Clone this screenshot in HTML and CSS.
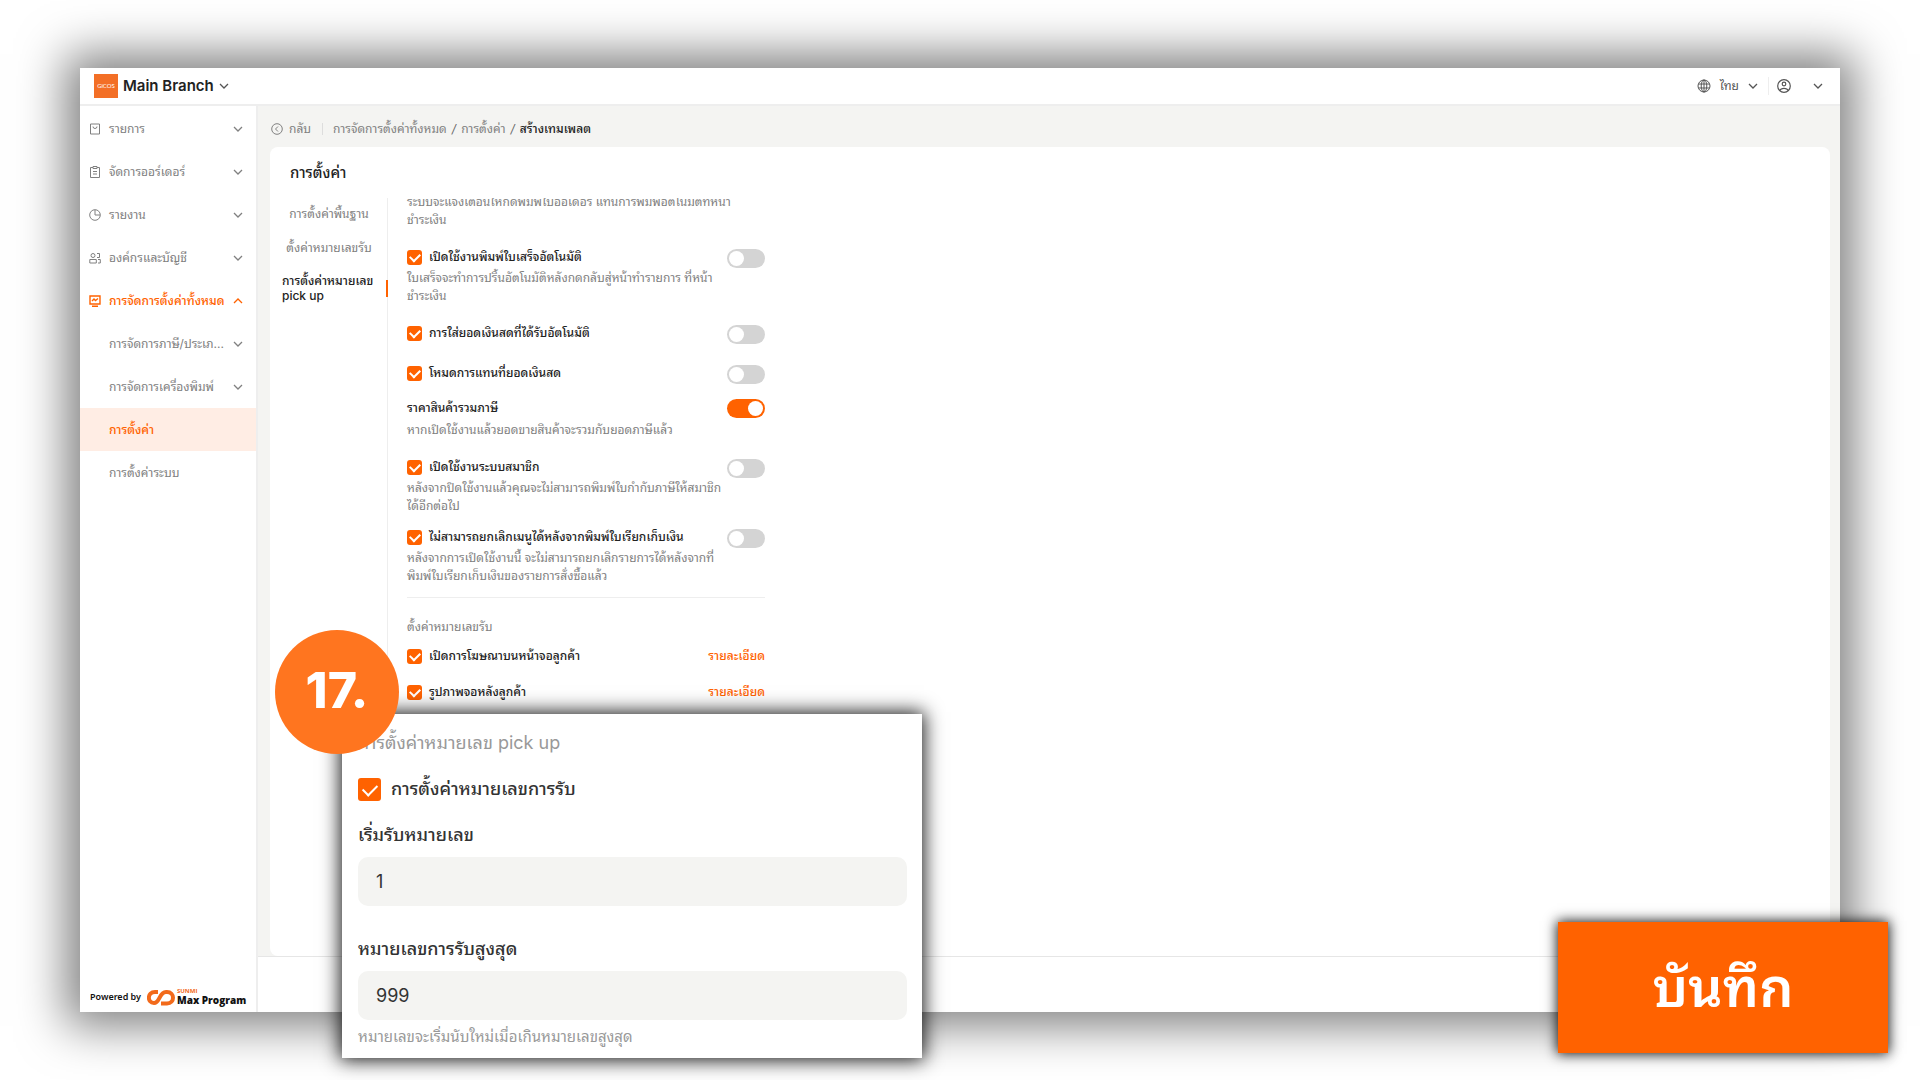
FILE: index.html
```html
<!DOCTYPE html>
<html lang="th">
<head>
<meta charset="utf-8">
<title>การตั้งค่า</title>
<link rel="stylesheet" href="styles.css">
</head>
<body>
<svg width="0" height="0" class="defs" aria-hidden="true">
  <symbol id="chev" viewBox="0 0 10 10"><path d="M1 3l4 4 4-4" fill="none" stroke="currentColor" stroke-width="1.3"/></symbol>
</svg>
<div class="window">
  <header class="topbar">
    <button class="branch" type="button"><span class="logo">GiCOS</span>Main Branch<svg class="chev"><use href="#chev"/></svg></button>
    <div class="top-tools">
      <button class="lang" type="button">
        <svg class="icon-m" viewBox="0 0 14 14" fill="none" stroke="currentColor"><circle cx="7" cy="7" r="6"/><ellipse cx="7" cy="7" rx="2.800" ry="6"/><path d="M7 1v12M1.500 5h11M1.500 9h11"/></svg>
        ไทย<svg class="chev"><use href="#chev"/></svg></button>
      <button class="user" type="button" aria-label="บัญชี">
        <svg class="icon-m" viewBox="0 0 14 14" fill="none" stroke="currentColor" stroke-width="1.2"><circle cx="7" cy="7" r="6.3"/><circle cx="7" cy="5" r="1.8"/><path d="M2.800 11.500C4 8.600 10 8.600 11.200 11.500"/></svg>
        <svg class="chev"><use href="#chev"/></svg></button>
    </div>
  </header>
  <div class="body">
    <aside class="sidebar">
      <nav class="menu">
        <a href="#"><svg class="icon" viewBox="0 0 12 12"><path d="M1.500 1h9v10h-9zM4 3.500a2 2 0 0 0 4 0"/></svg><span>รายการ</span><svg class="chev"><use href="#chev"/></svg></a>
        <a href="#"><svg class="icon" viewBox="0 0 12 12"><path d="M4 1.500H1.500v10h9v-10H8M4 .500h4v2H4zM4 5.500h4M4 8h4"/></svg><span>จัดการออร์เดอร์</span><svg class="chev"><use href="#chev"/></svg></a>
        <a href="#"><svg class="icon" viewBox="0 0 12 12"><circle cx="6" cy="6" r="5.300"/><path d="M6 1v5h5"/></svg><span>รายงาน</span><svg class="chev"><use href="#chev"/></svg></a>
        <a href="#"><svg class="icon" viewBox="0 0 12 12"><circle cx="4" cy="3.500" r="2"/><path d="M.800 11V7.500h6.500V11zM8 1.500h2.500v4H8M9 7.500h2.300V11H9"/></svg><span>องค์กรและบัญชี</span><svg class="chev"><use href="#chev"/></svg></a>
        <a href="#" class="open"><svg class="icon" viewBox="0 0 12 12"><path d="M1 1h10v8H1zM3 11.300h6M3 6l2-2 1.500 1.500L9 3.500" stroke-width="1.400"/></svg><span>การจัดการตั้งค่าทั้งหมด</span><svg class="chev up"><use href="#chev"/></svg></a>
        <a href="#" class="sub"><span>การจัดการภาษี/ประเภ...</span><svg class="chev"><use href="#chev"/></svg></a>
        <a href="#" class="sub"><span>การจัดการเครื่องพิมพ์</span><svg class="chev"><use href="#chev"/></svg></a>
        <a href="#" class="sub current"><span>การตั้งค่า</span></a>
        <a href="#" class="sub"><span>การตั้งค่าระบบ</span></a>
      </nav>
      <div class="powered"><span>Powered by</span>
        <svg class="mark" viewBox="0 0 28 17" fill="none" stroke="#f26a1b" stroke-width="4"><path d="M11 3H8C0 3 0 14 7 14c6 0 5-11 12-11h1c8 0 8 11.500 0 11.500h-6"/></svg>
        <div class="brand"><small>SUNMI</small><b>Max Program</b></div>
      </div>
    </aside>
    <main class="main">
      <nav class="crumbs">
        <a href="#" class="back"><svg class="icon" viewBox="0 0 12 12"><circle cx="6" cy="6" r="5.300"/><path d="M7 3.500L4.500 6 7 8.500"/></svg>กลับ</a>
        <a href="#">การจัดการตั้งค่าทั้งหมด</a><i>/</i><a href="#">การตั้งค่า</a><i>/</i><strong>สร้างเทมเพลต</strong>
      </nav>
      <section class="card">
        <h1>การตั้งค่า</h1>
        <div class="columns">
          <nav class="tabs">
            <a href="#">การตั้งค่าพื้นฐาน</a>
            <a href="#">ตั้งค่าหมายเลขรับ</a>
            <a href="#" class="active">การตั้งค่าหมายเลข<br>pick up</a>
          </nav>
          <div class="options">
            <p class="cut">ระบบจะแจ้งเตือนให้กดพิมพ์ใบออเดอร์ แทนการพิมพ์อัตโนมัติที่หน้า<br>ชำระเงิน</p>
            <div class="option gap-l"><label><input type="checkbox" checked>เปิดใช้งานพิมพ์ใบเสร็จอัตโนมัติ</label><input type="checkbox" class="switch" aria-label="เปิดใช้งานพิมพ์ใบเสร็จอัตโนมัติ"></div>
            <p>ใบเสร็จจะทำการปริ้นอัตโนมัติหลังกดกลับสู่หน้าทำรายการ ที่หน้า<br>ชำระเงิน</p>
            <div class="option gap-l"><label><input type="checkbox" checked>การใส่ยอดเงินสดที่ได้รับอัตโนมัติ</label><input type="checkbox" class="switch" aria-label="การใส่ยอดเงินสดที่ได้รับอัตโนมัติ"></div>
            <div class="option gap-l"><label><input type="checkbox" checked>โหมดการแทนที่ยอดเงินสด</label><input type="checkbox" class="switch" aria-label="โหมดการแทนที่ยอดเงินสด"></div>
            <div class="option plain gap-m"><label for="tax">ราคาสินค้ารวมภาษี</label><input id="tax" type="checkbox" class="switch" checked></div>
            <p>หากเปิดใช้งานแล้วยอดขายสินค้าจะรวมกับยอดภาษีแล้ว</p>
            <div class="option gap-l"><label><input type="checkbox" checked>เปิดใช้งานระบบสมาชิก</label><input type="checkbox" class="switch" aria-label="เปิดใช้งานระบบสมาชิก"></div>
            <p>หลังจากปิดใช้งานแล้วคุณจะไม่สามารถพิมพ์ใบกำกับภาษีให้สมาชิก<br>ได้อีกต่อไป</p>
            <div class="option gap-m"><label><input type="checkbox" checked>ไม่สามารถยกเลิกเมนูได้หลังจากพิมพ์ใบเรียกเก็บเงิน</label><input type="checkbox" class="switch" aria-label="ไม่สามารถยกเลิกเมนู"></div>
            <p>หลังจากการเปิดใช้งานนี้ จะไม่สามารถยกเลิกรายการได้หลังจากที่<br>พิมพ์ใบเรียกเก็บเงินของรายการสั่งซื้อแล้ว</p>
            <hr>
            <h2>ตั้งค่าหมายเลขรับ</h2>
            <div class="option linked"><label><input type="checkbox" checked>เปิดการโฆษณาบนหน้าจอลูกค้า</label><a href="#">รายละเอียด</a></div>
            <div class="option linked"><label><input type="checkbox" checked>รูปภาพจอหลังลูกค้า</label><a href="#">รายละเอียด</a></div>
          </div>
        </div>
      </section>
      <footer class="actions"></footer>
    </main>
  </div>
</div>
<form class="callout">
  <h2>การตั้งค่าหมายเลข pick up</h2>
  <label class="check"><input type="checkbox" checked>การตั้งค่าหมายเลขการรับ</label>
  <label for="start">เริ่มรับหมายเลข</label>
  <input id="start" type="text" value="1">
  <label for="max">หมายเลขการรับสูงสุด</label>
  <input id="max" type="text" value="999">
  <p>หมายเลขจะเริ่มนับใหม่เมื่อเกินหมายเลขสูงสุด</p>
</form>
<div class="step">17.</div>
<button class="save" type="button">บันทึก</button>
</body>
</html>
```
FILE: styles.css
```css
* { box-sizing: border-box; margin: 0; }
body {
  position: relative;
  min-height: 100vh;
  padding: 68px 80px;
  display: flex;
  background: #fff;
  color: #333;
  font: 12px/18px Inter, "Noto Sans Thai Looped", "Noto Looped Thai", Loma, Waree, Garuda, Umpush, "Noto Sans Thai", sans-serif;
  overflow: hidden;
}
a { color: inherit; text-decoration: none; }
button { border: 0; background: none; font: inherit; color: inherit; padding: 0; }
.defs { position: absolute; }
.icon { width: 12px; height: 12px; flex: none; fill: none; stroke: currentColor; }
.icon-m { width: 14px; height: 14px; }
.chev { width: 10px; height: 10px; flex: none; }
.up { transform: rotate(180deg); }

.window {
  flex: 1;
  display: flex;
  flex-direction: column;
  background: #fff;
  box-shadow: 0 0 44px 14px rgba(0, 0, 0, .5);
}
.topbar {
  height: 38px;
  padding: 0 17px 0 14px;
  display: flex;
  justify-content: space-between;
  align-items: center;
  border-bottom: 2px solid #eee;
}
.branch { display: flex; align-items: center; gap: 5px; font-size: 15px; font-weight: 600; color: #222; }
.branch .chev, .top-tools { color: #555; }
.logo {
  width: 24px;
  height: 24px;
  background: #f36f26;
  color: #fff;
  font: 6px/24px Lato, sans-serif;
  text-align: center;
}
.top-tools, .lang, .user { display: flex; align-items: center; }
.lang { gap: 9px; padding-right: 10px; border-right: 1px solid #eee; }
.user { gap: 22px; padding-left: 8px; }

.body { flex: 1; display: flex; }
.sidebar {
  width: 178px;
  display: flex;
  flex-direction: column;
  justify-content: space-between;
  border-right: 2px solid #eee;
}
.menu { padding-top: 1px; }
.menu a {
  height: 43px;
  padding: 0 13px 0 9px;
  display: flex;
  align-items: center;
  gap: 8px;
  color: #808080;
  white-space: nowrap;
}
.menu span { flex: 1; }
.menu a.sub { padding-left: 29px; }
.menu a.open, .menu a.current { color: #ff6200; font-weight: 500; }
.menu a.current { background: #ffede4; }
.powered { display: flex; align-items: center; gap: 6px; padding: 0 0 6px 10px; font: 600 9px/12px "Noto Sans", sans-serif; color: #111; }
.mark { width: 28px; height: 17px; }
.brand { margin-left: -4px; display: flex; flex-direction: column; }
.brand small { font: 700 6px/6px "Open Sans", sans-serif; color: #f26a1b; }
.brand b { font: 800 10px/12px "Open Sans", sans-serif; }

.main { flex: 1; display: flex; flex-direction: column; background: #f4f4f2; }
.crumbs { height: 41px; padding: 4px 13px 0; display: flex; align-items: center; gap: 5px; color: #808080; }
.crumbs i { color: #666; }
.crumbs strong { color: #222; font-weight: 500; }
.back { display: flex; align-items: center; gap: 6px; padding-right: 11px; margin-right: 5px; border-right: 1px solid #ddd; line-height: 12px; }
.card { flex: 1; margin: 0 10px 0 12px; padding: 16px 20px 0; border-radius: 8px; background: #fff; display: flex; flex-direction: column; }
h1 { font-size: 15px; line-height: 20px; font-weight: 500; color: #222; }
.columns { flex: 1; margin-top: 15px; display: flex; }
.tabs { margin-left: -8px; width: 106px; padding: 7px 11px 0 0; display: flex; flex-direction: column; gap: 16px; color: #808080; border-right: 1px solid #eee; text-align: center; white-space: nowrap; }
.tabs a.active { position: relative; color: #222; font-weight: 500; text-align: left; line-height: 15px; }
.active::after { content: ""; position: absolute; right: -12px; top: 7px; width: 2px; height: 17px; background: #ff6200; }
.options { width: 377px; padding-left: 19px; overflow: hidden; }
.options p { color: #808080; white-space: nowrap; }
.options .cut { margin-top: -5px; }
.option { display: flex; justify-content: space-between; align-items: flex-start; height: 20px; color: #222; font-weight: 500; line-height: 16px; }
.option label, .check { display: flex; align-items: center; gap: 7px; }
.option a { color: #ff6200; }
.gap-l { margin-top: 20px; }
.gap-m { margin-top: 14px; }
.plain { height: 22px; line-height: 18px; }
.linked { margin-top: 12px; height: 24px; }
hr { border: 0; border-top: 1px solid #eee; margin: 12px 0 20px; }
.options h2 { font-size: 12px; line-height: 18px; font-weight: 400; color: #808080; }
input[type=checkbox] {
  appearance: none;
  flex: none;
  width: 15px;
  height: 15px;
  margin: 0;
  border-radius: 3px;
  background: #ff6200;
  display: grid;
  place-items: center;
}
input[type=checkbox]:not(.switch)::before {
  content: "";
  width: 8px;
  height: 5px;
  border: solid #fff;
  border-width: 0 0 2px 2px;
  transform: translateY(-1px) rotate(-45deg);
}
input[type=checkbox].switch { width: 38px; height: 19px; padding: 0 2px; border-radius: 10px; background: #d4d4d4; justify-items: start; }
.switch::before { content: ""; width: 15px; height: 15px; border-radius: 50%; background: #fff; }
input[type=checkbox].switch:checked { background: #ff6200; justify-items: end; }
.actions { height: 56px; border-top: 1px solid #e6e6e6; background: #fff; }

.callout {
  position: absolute;
  left: 342px;
  bottom: 22px;
  width: 580px;
  padding: 17px 15px 9px 16px;
  display: flex;
  flex-direction: column;
  background: #fff;
  box-shadow: 0 0 18px 2px rgba(0, 0, 0, .9);
  font-size: 18px;
  line-height: 24px;
  font-weight: 500;
}
.callout h2 { font-size: 18px; line-height: 24px; font-weight: 400; color: #999; }
.callout .check { gap: 10px; margin: 22px 0; }
.callout .check input { width: 23px; height: 23px; }
.callout .check input::before { width: 12px; height: 7px; }
.callout input[type=text] { height: 49px; margin: 10px 0 31px; padding: 0 18px; border: 0; border-radius: 10px; background: #f4f4f2; font: inherit; font-weight: 400; color: #333; }
.callout #max { margin-bottom: 5px; }
.callout p { font-size: 15px; font-weight: 400; color: #999; }
.step {
  position: absolute;
  left: 275px;
  top: 630px;
  width: 124px;
  height: 124px;
  border-radius: 50%;
  background: #ff751f;
  color: #fff;
  font: 800 50px/120px Inter, sans-serif;
  text-align: center;
}
.save {
  position: absolute;
  right: 32px;
  bottom: 27px;
  width: 330px;
  height: 131px;
  background: #ff6200;
  color: #fff;
  font-size: 54px;
  font-weight: 600;
  box-shadow: 0 0 12px 1px rgba(0, 0, 0, .9);
}
```
